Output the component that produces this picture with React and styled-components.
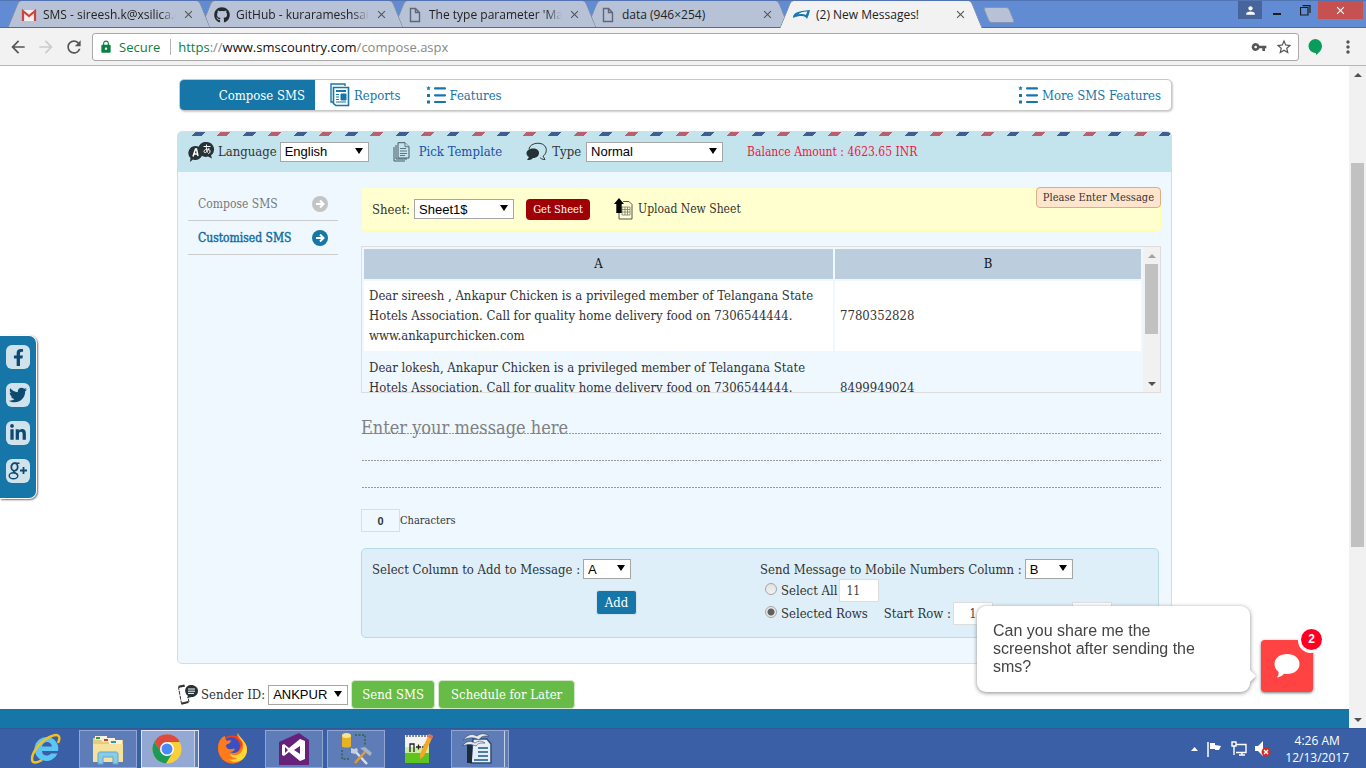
import React from "react";
import styled, { createGlobalStyle, css } from "styled-components";
import {
  MdArrowBack,
  MdArrowForward,
  MdRefresh,
  MdLock,
  MdVpnKey,
  MdStarBorder,
  MdMoreVert,
  MdPerson,
  MdClose,
} from "react-icons/md";
import { FaGithub, FaFacebookF, FaTwitter, FaLinkedinIn } from "react-icons/fa";

const slab = '"DejaVu Serif Condensed", "DejaVu Serif", serif';
const ui = '"Open Sans", "Noto Sans", sans-serif';
const arial = '"Liberation Sans", Arial, sans-serif';
const blue = "#1776a8";

const GlobalStyle = createGlobalStyle`
  * { box-sizing: border-box; }
  body { margin: 0; background: #fff; font-family: ${slab}; font-size: 13px; color: #333; }
  button, input, select, textarea { font: inherit; margin: 0; }
  svg { display: block; flex: none; }
  a { text-decoration: none; color: inherit; }
`;

const Desktop = styled.div`
  display: flex;
  flex-direction: column;
  height: 100vh;
  overflow: hidden;
`;

/* ---------- browser window ---------- */

const TabStrip = styled.header`
  display: flex;
  height: 28px;
  padding-left: 7px;
  background: #618bd2;
  border-bottom: 1px solid #4b6ba6;
  border-top: 1px solid #5274b3;
  font-family: ${ui};
  font-size: 12px;
  color: #222;
`;

const Tab = styled.div`
  position: relative;
  z-index: ${(p) => (p.$active ? 9 : 5 - p.$order)};
  flex: 0 0 204px;
  min-width: 0;
  height: 27px;
  margin-right: -11px;
  padding: 0 16px 0 14px;
  display: flex;
  align-items: center;
  gap: 6px;

  &::before,
  &::after {
    content: "";
    position: absolute;
    z-index: -1;
    top: 0;
    bottom: ${(p) => (p.$active ? 0 : 1)}px;
    width: 52%;
    background: ${(p) => (p.$active ? "#f2f2f2" : "#b8c2d6")};
    border: 0 solid #7c88a0;
  }
  &::before {
    left: 6px;
    transform: skewX(-22deg);
    border-left-width: 1px;
    border-top-left-radius: 3px;
  }
  &::after {
    right: 6px;
    transform: skewX(22deg);
    border-right-width: 1px;
    border-top-right-radius: 3px;
  }
`;

const TabTitle = styled.span`
  flex: 1;
  min-width: 0;
  overflow: hidden;
  white-space: nowrap;
  ${(p) => p.$fade && css`mask-image: linear-gradient(90deg, #000 88%, transparent);`}
`;

const PlainButton = styled.button`
  display: flex;
  align-items: center;
  justify-content: center;
  padding: 0;
  border: 0;
  background: none;
  color: ${(p) => p.$color || "#555"};
`;

const NewTab = styled.button`
  width: 26px;
  height: 16px;
  margin: 6px 0 0 14px;
  padding: 0;
  border: 1px solid #8595b8;
  border-radius: 3px;
  background: #b8c2d6;
  transform: skewX(22deg);
`;

const WindowButtons = styled.div`
  display: flex;
  align-items: flex-start;
  margin-left: auto;
  padding-right: 3px;
`;

const WindowButton = styled.button`
  display: flex;
  align-items: center;
  justify-content: center;
  width: ${(p) => p.$width}px;
  height: 18px;
  padding: 0;
  border: 0;
  color: ${(p) => p.$color || "#1c1c1c"};
  background: ${(p) => p.$bg || "transparent"};
`;

const Toolbar = styled.div`
  display: flex;
  align-items: center;
  height: 38px;
  padding: 0 8px;
  gap: 8px;
  background: #f2f2f2;
  border-bottom: 1px solid #b6b6b6;
`;

const Extensions = styled.div`
  display: flex;
  align-items: center;
  gap: 15px;
`;

const Omnibox = styled.div`
  flex: 1;
  display: flex;
  align-items: center;
  height: 28px;
  padding: 0 5px 0 6px;
  background: #fff;
  border: 1px solid #a9a9a9;
  border-radius: 3px;
  font-family: ${ui};
  font-size: 13px;
  color: #888;
`;

const Secure = styled.span`
  color: #0b8043;
  margin: 0 7px 0 6px;
  padding-right: 10px;
  line-height: 16px;
  border-right: 1px solid #b5b5b5;
`;

const Address = styled.span`
  flex: 1;
  b { font-weight: 400; color: #111; }
  i { font-style: normal; color: #0b8043; }
`;

const OmniActions = styled.div`
  display: flex;
  gap: 8px;
`;

/* ---------- page ---------- */

const Viewport = styled.div`
  position: relative;
  flex: 1;
  min-height: 0;
  display: flex;
`;

const Page = styled.div`
  flex: 1;
  display: flex;
  flex-direction: column;
  overflow: hidden;
`;

const Content = styled.main`
  flex: none;
  width: 100%;
  max-width: 995px;
  margin: 0 auto;
  padding-top: 13px;
`;

const SiteFooter = styled.footer`
  flex: 1;
  min-height: 19px;
  background: ${blue};
`;

const Nav = styled.nav`
  display: flex;
  height: 32px;
  margin: 0 0 20px 2px;
  background: #fff;
  border: 1px solid #c8c8c8;
  border-radius: 5px;
  box-shadow: 1px 1px 2px #ccc;
  overflow: hidden;
  color: ${blue};
`;

const NavLink = styled.a`
  display: flex;
  align-items: center;
  gap: 4px;
  padding: 0 10px;
  ${(p) =>
    p.$active &&
    css`
      width: 135px;
      justify-content: flex-end;
      background: ${blue};
      color: #fff;
    `}
  ${(p) => p.$end && css`margin-left: auto;`}
  ${(p) => p.$spaced && css`padding-left: 15px;`}
`;

const Card = styled.section`
  border: 1px solid #d6dde0;
  border-radius: 5px;
  background: #eff8ff;
  overflow: hidden;
  padding-bottom: 25px;
`;

const AirmailStripes = styled.div`
  height: 4px;
  margin-left: 9px;
  background: repeating-linear-gradient(
    135deg,
    transparent 0 6px,
    #3f5f90 6px 13px,
    transparent 13px 24px,
    #b8606f 24px 31px,
    transparent 31px 36px
  );
`;

const CardHeader = styled.div`
  height: 40px;
  background: #c3e3ed;
`;

const HeaderRow = styled.div`
  display: flex;
  align-items: center;
  height: 31px;
  padding-left: 10px;
`;

const HeaderGroup = styled.div`
  display: flex;
  align-items: center;
  gap: ${(p) => p.$gap || 3}px;
  margin-right: 24px;
  color: ${(p) => p.$color || "#333"};
`;

const Balance = styled.output`
  font-size: 12px;
  color: #ee1742;
`;

const SelectBox = styled.span`
  position: relative;
  display: inline-flex;
  flex: none;
  width: ${(p) => p.$width}px;
  &::after {
    content: "";
    position: absolute;
    right: 6px;
    top: 6px;
    border: 4px solid transparent;
    border-top: 6px solid #000;
    border-bottom: 0;
    pointer-events: none;
  }
`;

const NativeSelect = styled.select`
  appearance: none;
  width: 100%;
  height: 20px;
  padding: 0 4px;
  border: 1px solid #a6a6a6;
  border-radius: 0;
  background: #fff;
  color: #000;
  font-family: ${arial};
  font-size: 13px;
`;

const Columns = styled.div`
  display: flex;
  padding: 15px 10px 0;
`;

const Side = styled.nav`
  flex: 0 0 150px;
  margin-right: 23px;
`;

const SideLink = styled.a`
  display: flex;
  align-items: center;
  justify-content: space-between;
  height: 34px;
  padding: 0 10px;
  border-bottom: 1px solid #ccc;
  font-size: 12px;
  color: ${(p) => (p.$active ? "#0d6d9f" : "#777")};
  -webkit-text-stroke: ${(p) => (p.$active ? "0.4px" : "0")};
`;

const Main = styled.div`
  flex: 1;
  min-width: 0;
`;

const SheetBar = styled.div`
  position: relative;
  display: flex;
  align-items: center;
  height: 44px;
  padding-left: 10px;
  border: 1px solid #ffffa8;
  border-radius: 4px;
  background: #ffffcf;
  gap: 4px;
`;

const Notice = styled.div`
  position: absolute;
  top: -1px;
  right: -1px;
  height: 21px;
  padding: 0 6px;
  border: 1px solid #dcae86;
  border-radius: 4px;
  background: #ffe5cb;
  font-size: 11px;
  line-height: 19px;
`;

const GetSheet = styled.button`
  height: 21px;
  width: 64px;
  margin: 0 20px 0 8px;
  padding: 0;
  border: 0;
  border-radius: 4px;
  background: #a00005;
  color: #fff;
  font-size: 11px;
`;

const UploadLink = styled.a`
  display: flex;
  align-items: center;
  gap: 4px;
  font-size: 12px;
`;

const Grid = styled.div`
  display: flex;
  height: 147px;
  margin-top: 15px;
  border: 1px solid #ddd;
  overflow: hidden;
`;

const GridBody = styled.div`
  flex: 1;
  overflow: hidden;
`;

const Table = styled.table`
  width: 100%;
  border-spacing: 2px;
  table-layout: fixed;
  line-height: 20px;
  th { padding: 5px; background: #bccdde; font-weight: 400; color: #111; }
  th:first-child { width: 469px; }
  td { padding: 5px; }
  tbody tr:nth-child(odd) td { background: #fff; }
`;

const Track = styled.div`
  flex: 0 0 17px;
  display: flex;
  flex-direction: column;
  align-items: center;
  background: #f1f1f1;
`;

const Arrow = styled.span`
  height: 17px;
  display: flex;
  align-items: center;
  &::before {
    content: "";
    border: 4px solid transparent;
    ${(p) =>
      p.$up
        ? css`border-bottom-color: ${p.$faint ? "#a3a3a3" : "#505050"}; border-top: 0;`
        : css`border-top-color: #505050; border-bottom: 0;`}
  }
`;

const Thumb = styled.span`
  width: 13px;
  height: ${(p) => p.$size};
  margin-top: ${(p) => p.$start};
  margin-bottom: auto;
  background: #c1c1c1;
`;

const Message = styled.textarea`
  display: block;
  width: 100%;
  height: 81px;
  margin-top: 14px;
  padding: 7px 0 0;
  border: 0;
  resize: none;
  overflow: hidden;
  line-height: 27px;
  font-size: 18px;
  background:
    linear-gradient(90deg, #eff8ff 1px, transparent 1px) 0 0 / 3px 100%,
    linear-gradient(transparent 26px, #999 26px) 0 0 / 100% 27px;
  &::placeholder { color: #808080; opacity: 1; }
`;

const Counter = styled.label`
  display: flex;
  align-items: center;
  margin: 21px 0 16px;
  font-size: 11px;
`;

const CountInput = styled.input`
  width: 39px;
  height: 23px;
  padding: 0;
  border: 1px solid #ddd;
  background: transparent;
  text-align: center;
  font-family: ${arial};
  font-weight: 700;
  font-size: 11px;
  color: #333;
`;

const Options = styled.div`
  display: flex;
  height: 90px;
  margin-right: 2px;
  padding: 10px;
  border: 1px solid #b7dbe9;
  border-radius: 5px;
  background: #deeffa;
`;

const OptionColumn = styled.div`
  flex: 0 0 ${(p) => p.$basis};
  white-space: nowrap;
`;

const Field = styled.div`
  display: flex;
  align-items: center;
  gap: 3px;
  height: 20px;
`;

const RadioRow = styled.div`
  display: flex;
  align-items: center;
  gap: 2px;
  height: 23px;
  padding-left: 5px;
`;

const Radio = styled.input`
  appearance: none;
  width: 12px;
  height: 12px;
  margin: 0 2px 4px 0;
  border: 1px solid #a5a5a5;
  border-radius: 50%;
  background: linear-gradient(#e2e2e2, #f2f2f2);
  &:checked { background: radial-gradient(circle, #606060 3px, #eaeaea 4px); }
`;

const RowInput = styled.input`
  width: 40px;
  height: 23px;
  padding: 0 6px;
  border: 1px solid #ddd;
  background: #fff;
  color: #444;
  font-size: 12px;
  text-align: ${(p) => p.$align || "left"};
`;

const RowLabel = styled.label`
  margin-left: ${(p) => p.$left || 0}px;
`;

const AddButton = styled.button`
  display: block;
  width: 41px;
  height: 25px;
  margin: 11px 0 0 224px;
  padding: 0;
  border: 1px solid #d2e4ee;
  border-radius: 3px;
  background: ${blue};
  color: #fff;
`;

const SendRow = styled.div`
  display: flex;
  align-items: center;
  gap: 3px;
  margin-top: 16px;
  height: 29px;
`;

const GreenButton = styled.button`
  height: 29px;
  padding: 0;
  width: ${(p) => p.$width}px;
  border: 1px solid #d2e6ca;
  border-radius: 4px;
  background: #66bc46;
  color: #fff;
`;

const Social = styled.aside`
  position: absolute;
  left: 0;
  top: 269px;
  display: flex;
  flex-direction: column;
  gap: 14px;
  padding: 9px 6px 15px;
  background: ${blue};
  border: 1px solid #fff;
  border-left: 0;
  border-radius: 0 8px 8px 0;
  box-shadow: 1px 1px 2px #777;
`;

const SocialLink = styled.a`
  display: flex;
  align-items: center;
  justify-content: center;
  width: 24px;
  height: 24px;
  border-radius: 6px;
  background: #d0e3ec;
  color: #0d4a72;
`;

const Chat = styled.div`
  position: absolute;
  right: 53px;
  bottom: 36px;
  display: flex;
  align-items: flex-end;
  gap: 11px;
`;

const Bubble = styled.div`
  position: relative;
  width: 273px;
  padding: 16px 40px 16px 16px;
  border-radius: 9px;
  background: #fff;
  filter: drop-shadow(0 1px 2px #888);
  font-family: ${arial};
  font-size: 16px;
  line-height: 18px;
  color: #444;
  &::after {
    content: "";
    position: absolute;
    right: -6px;
    bottom: 9px;
    border: 7px solid transparent;
    border-left-color: #fff;
    border-right: 0;
  }
`;

const ChatButton = styled.button`
  position: relative;
  display: flex;
  align-items: center;
  justify-content: center;
  width: 52px;
  height: 52px;
  padding: 0;
  border: 0;
  border-radius: 4px;
  background: #ff4242;
  box-shadow: 0 1px 3px #777;
`;

const Badge = styled.span`
  position: absolute;
  top: -11px;
  right: -9px;
  width: 21px;
  height: 21px;
  border-radius: 50%;
  background: #ff0022;
  box-shadow: -1px 1px 0 2px #fff;
  color: #fff;
  font: 700 12px/21px ${arial};
`;

/* ---------- taskbar ---------- */

const Taskbar = styled.footer`
  display: flex;
  align-items: center;
  height: 40px;
  padding: 0 17px;
  gap: 4px;
  background: #3a5fa6;
  border-top: 1px solid #345798;
`;

const Task = styled.button`
  display: flex;
  align-items: center;
  justify-content: center;
  width: 58px;
  height: 38px;
  padding: 0 ${(p) => (p.$stacked ? 6 : 0)}px 0 0;
  border: 1px solid ${(p) => (p.$active ? "#dfe6f2" : p.$open ? "#90a5cf" : "transparent")};
  background: ${(p) => (p.$active ? "#93a8d2" : p.$open ? "#5e7cb8" : "transparent")};
  ${(p) => p.$stacked && css`box-shadow: inset -3px 0 0 #5e7cb8, inset -4px 0 0 #c5d0e6;`}
`;

const Tray = styled.div`
  display: flex;
  align-items: center;
  gap: 8px;
  margin-left: auto;
`;

const Clock = styled.time`
  margin-left: 6px;
  text-align: center;
  font-family: ${ui};
  font-size: 12px;
  line-height: 17px;
  color: #fff;
`;

/* ---------- drawings ---------- */

const GmailIcon = () => (
  <svg width="16" height="14" viewBox="0 0 16 14">
    <path d="M1 2h14v11H1z" fill="#f3f1f1" />
    <path d="M2 13V3l6 5 6-5v10" fill="none" stroke="#d0443c" strokeWidth="2.2" />
  </svg>
);

const PageIcon = () => (
  <svg width="16" height="16" viewBox="0 0 16 16" fill="none" stroke="#5f6675" strokeWidth="1.4">
    <path d="M3.5 1.5h5l4 4v9h-9zM8.5 1.5v4h4" />
  </svg>
);

const SiteIcon = () => (
  <svg width="17" height="12" viewBox="0 0 17 12">
    <path d="M0 9C0 4 4 2 17 1c-.5 3-1.500 6-3 9-1-2-3-3-5-3-3 0-6 .5-9 2zm5-3.500c3-.8 6-.5 7.500.5.800-1 1.500-2 1.700-3.500C10 2.800 7 3.500 5 5.500z" fill="#167ab0" fillRule="evenodd" />
  </svg>
);

const RestoreIcon = () => (
  <svg width="11" height="11" viewBox="0 0 11 11" fill="none" stroke="#1c1c1c">
    <path d="M.5 2.500h7.500v7.500H.5zM2.500.6H10v7.500" strokeWidth="1.2" />
  </svg>
);

const GreenDrop = () => (
  <svg width="16" height="18" viewBox="0 0 16 18">
    <path d="M8 1a7 7 0 0 1 7 7c0 4-3 7-6 9v-2A7 7 0 1 1 8 1z" fill="#0a9c5a" />
  </svg>
);

const ReportsIcon = () => (
  <svg width="20" height="24" viewBox="0 0 20 24" fill="none" stroke={blue}>
    <path d="M3 19H1V1h14v2" strokeWidth="1.4" />
    <path d="M3.500 4.500h15v18H6l-2.500-2z" strokeWidth="1.6" fill="#fff" />
    <path d="M6 8h10" strokeWidth="2" />
    <path d="M6 11.500h3M6 14h3M6 16.500h3M6 19h10" strokeWidth="1.1" />
    <path d="M11 11h5v6h-5z" fill={blue} />
  </svg>
);

const ListIcon = () => (
  <svg width="20" height="18" viewBox="0 0 20 18" fill={blue}>
    <path d="M2.500 0l.7 1.300 1.500.2-1.200 1.100.4 1.700-1.400-.8-1.400.8.4-1.700L.3 1.500l1.500-.2z" />
    <path d="M1 8h3v3H1zM1 14.500h3v3H1z" />
    <path d="M9 2.300h10M9 9.300h10M9 16h10" stroke={blue} strokeWidth="2.200" strokeLinecap="round" />
  </svg>
);

const LanguageIcon = () => (
  <svg width="27" height="20" viewBox="0 0 27 20">
    <path d="M7 4a7 7 0 1 1-2 13.500L2 20l.5-4A7 7 0 0 1 7 4z" fill="#263238" />
    <path d="M19 0a7.500 7.500 0 0 1 4 13.500l1 3-4-2A7.500 7.500 0 1 1 19 0z" fill="#263238" />
    <path d="M5 14.500 7.500 7h1L10 14M5.500 12h4.500" stroke="#fff" strokeWidth="1.500" fill="none" />
    <path d="M15.500 4.500h7M18.500 2.500c-.3 4 0 6 1 8M21 6c-1 4-5 6-5 3.500S22 6 22 9s-2 2.500-2 2.500" stroke="#fff" fill="none" />
  </svg>
);

const TemplateIcon = () => (
  <svg width="18" height="20" viewBox="0 0 18 20" fill="#c3e3ed" stroke="#475960">
    <path d="M1 5v14h11M3 3v14h11" />
    <path d="M5 .7h7l4 4V16H5z" />
    <path d="M12 .7v4h4M7 6.500h6M7 9h7M7 11.500h7M7 13.500h5" strokeWidth=".8" />
  </svg>
);

const TypeIcon = () => (
  <svg width="21" height="19" viewBox="0 0 21 19">
    <path d="M3 7C4 0 18-1 20 6c1 4-1 7-3 8l2 3.500c-3 0-4-1-5-2" fill="none" stroke="#333c40" />
    <path d="M7 6.500c4 0 6 2 6 4.500s-2 5-6 5c-2 2-3 2-6 2l2-3C-2 12 1 6.500 7 6.500z" fill="#263238" />
  </svg>
);

const CircleArrow = ({ color }) => (
  <svg width="16" height="16" viewBox="0 0 16 16">
    <circle cx="8" cy="8" r="8" fill={color} />
    <path d="M4 8h7M8 4.500 11.500 8 8 11.500" stroke="#fff" strokeWidth="2" fill="none" />
  </svg>
);

const UploadIcon = () => (
  <svg width="20" height="22" viewBox="0 0 20 22">
    <path d="M9 3.500h6l3 3V21H5v-6" fill="#ffffcf" stroke="#555" />
    <path d="M8 9h8v8H8zM8 11.500h8M8 14h8M11 9v8M13.500 9v8" fill="none" stroke="#777" strokeWidth=".8" />
    <path d="M5 0 0 6h2.300v9h5.400V6H10z" fill="#000" />
  </svg>
);

const SenderIcon = () => (
  <svg width="21" height="21" viewBox="0 0 21 21">
    <path d="M8 2 1.500 3.500l3 16L12 18l-1-5" fill="none" stroke="#333" strokeDasharray="4 1" />
    <path d="m1.500 2.800 6-1.300M4.300 19.700l7-1.700" stroke="#333" strokeWidth="2" />
    <path d="M14 1c4 0 7 2.500 7 6s-3 6-6 6c-2 0-3 1-5 1l1-2C6 8 8 1 14 1z" fill="#263238" />
    <path d="M11 5h7M11 7.200h7M11 9.400h6" stroke="#fff" />
  </svg>
);

const ChatIcon = () => (
  <svg width="26" height="24" viewBox="0 0 26 24">
    <path d="M13 0c7 0 12.500 4 12.500 10S20 20 13 20c-1 0-2 0-3-.3C8 22 6 23 3 23.500c1-1.500 2-3 1.500-5.500C2 16 .5 13 .5 10 .5 4 6 0 13 0z" fill="#fff" />
  </svg>
);

const IeIcon = () => (
  <svg width="32" height="32" viewBox="0 0 32 32">
    <path d="M17 4a11.500 11.500 0 0 1 11 14H12c0 5 6 6 9 2.500h6.500A12 12 0 1 1 17 4zm-5 9.500h10c-1-6-9-6-10 0z" fill="#5cc6f5" fillRule="evenodd" />
    <path d="M28 10c3-6 1-10-6-7C13 6 2 18 2 26c0 5 5 4 10 1" fill="none" stroke="#f5c21b" strokeWidth="2.400" />
  </svg>
);

const FolderIcon = () => (
  <svg width="34" height="32" viewBox="0 0 34 32">
    <path d="M2 5h9l1 2h20v22H2z" fill="#e6cd7c" />
    <path d="M4 3h12v4H4zM11 5h13v4H11zM18 7h13v4H18z" fill="#f7f3da" />
    <path d="M5 4h4v2H5z" fill="#2f9e44" />
    <path d="M13 6h4v2h-4z" fill="#d03c2f" />
    <path d="M20 8h5v2h-5z" fill="#2f8fd0" />
    <path d="M2 11h30v18H2z" fill="#f5e39d" />
    <path d="M7 31V21c0-1 1-2 2-2h16c1 0 2 1 2 2v10h-5v-7H12v7z" fill="#8ccbe8" stroke="#5aa7cf" />
  </svg>
);

const ChromeIcon = () => (
  <svg width="30" height="30" viewBox="0 0 30 30">
    <circle cx="15" cy="15" r="14.500" fill="#f9cf3b" />
    <path d="M2.500 7.500A14.500 14.500 0 0 0 14 29.500L21 18l-6 3-6-3z" fill="#1d9a58" />
    <path d="M15 8h12.800A14.500 14.500 0 0 0 2.500 7.500L9 18.500z" fill="#dd4b3e" />
    <circle cx="15" cy="15" r="7" fill="#fff" />
    <circle cx="15" cy="15" r="5.500" fill="#4a8af4" />
  </svg>
);

const FirefoxIcon = () => (
  <svg width="31" height="31" viewBox="0 0 31 31">
    <circle cx="15.500" cy="16.500" r="14" fill="#f2401f" />
    <circle cx="14" cy="13" r="9" fill="#3b4fc4" />
    <path d="M20 0c-1 4 3 6 5 9 1 2 0 4-1 6-2 5-8 6-11 4 3 0 4-1 5-3-2-1-4 1-6 0-2 0-3-2-3-4 1-1 3-1 4-2 0-1 1-2 2-2-2-1-4-1-5 0C8 6 8 5 8 3 4 4 1 9 1 15c0 9 7 15.500 14.500 15.500S30 24 30 17c0-9-6-10-10-17z" fill="#ff7a1a" />
    <path d="M21 0c0 5 6 7 5 15-1 6-7 9-13 6 1 3 4 4 7 4-3 2-7 2-9 1 9 7 19 0 19-9 0-8-6-10-9-17z" fill="#ffd738" />
  </svg>
);

const VsIcon = () => (
  <svg width="30" height="32" viewBox="0 0 30 32">
    <path d="M0 9 20 0l10 7v25H0z" fill="#68217a" />
    <path d="m21 6 5 2v18l-5 2L10 19l-5 4-2-1V12l2-1 5 4zm0 7-6 4 6 4zM6 14v6l3-3z" fill="#fff" fillRule="evenodd" />
  </svg>
);

const ToolsIcon = () => (
  <svg width="32" height="34" viewBox="0 0 32 34">
    <path d="M2 4v10c0 2 9 2 9 0V4z" fill="#e6b422" />
    <ellipse cx="6.500" cy="3.500" rx="4.500" ry="2.500" fill="#fbe38e" />
    <path d="M15 3h10v10M2 18v9h8" fill="none" stroke="#2b6a3b" strokeWidth="1.500" strokeDasharray="2 1.500" />
    <path d="m14 18 13 14" stroke="#d9dee5" strokeWidth="2.500" />
    <path d="M25 20 15 31" stroke="#e39b2d" strokeWidth="2.500" />
    <path d="m20 16 5-1 7 6-2 3-5-4z" fill="#a9b3bf" />
    <path d="M11 16l3 1 3-1 1 3-3 3-4-1z" fill="#c7ced8" />
  </svg>
);

const NppIcon = () => (
  <svg width="32" height="34" viewBox="0 0 32 34">
    <path d="M3 3h24v28H3z" fill="#f2f4f0" />
    <path d="M3 20h24v11H3z" fill="#5fc41f" />
    <path d="M3 15h24v6H3z" fill="#c9ef9e" />
    <path d="M4 4h22" stroke="#888" strokeWidth="2" strokeDasharray="2 1" />
    <path d="M8 20v-8h4v8M14 15h5m-2.500-2.500v5M20 15h5m-2.500-2.500v5" fill="none" stroke="#222" strokeWidth="1.300" />
    <path d="m27 2 4 2-9 20-4 3v-5z" fill="#f3a82a" />
    <path d="m27 2 4 2-1 3-4-2z" fill="#e06a6a" />
  </svg>
);

const WriterIcon = () => (
  <svg width="32" height="34" viewBox="0 0 32 34">
    <path d="M12 7h14l4 5v19H10z" fill="#e8eef5" stroke="#2b4f75" strokeWidth="1.500" />
    <path d="M17 16h10M17 20h10M17 24h10M13 28h14" stroke="#4a7cae" strokeWidth="1.800" />
    <path d="M6 12h5v19H6z" fill="#1d2c3d" />
    <path d="M2 8c6-7 10-6 14-4 4-3 8-3 12 0-5 0-8 0-10 4-5-3-9-3-16 0zM1 14c5-6 9-5 13-3 4-3 7-2 10 0-5 0-7 0-9 3-5-2-8-2-14 0z" fill="#e5ebf2" stroke="#32465c" strokeWidth=".6" />
  </svg>
);

const FlagIcon = () => (
  <svg width="17" height="16" viewBox="0 0 17 16">
    <path d="M2 1v15" stroke="#fff" strokeWidth="1.500" />
    <path d="M4 2h5v2l6 1-2 4H9V8H4z" fill="#fff" />
  </svg>
);

const NetworkIcon = () => (
  <svg width="16" height="16" viewBox="0 0 16 16" fill="none" stroke="#fff" strokeWidth="1.400">
    <path d="M5 3.500h10v8H5M8 14h6M11 11v3" />
    <path d="M1 1h4v4H1zM3 5v9" />
  </svg>
);

const SpeakerIcon = () => (
  <svg width="16" height="16" viewBox="0 0 16 16">
    <path d="M0 5h3l5-5v15l-5-5H0z" fill="#fff" />
    <circle cx="11" cy="11" r="4.500" fill="#d8281e" />
    <path d="m9 9 4 4m0-4-4 4" stroke="#fff" strokeWidth="1.400" />
  </svg>
);

/* ---------- composed parts ---------- */

function Select({ id, width, value, options = [] }) {
  return (
    <SelectBox $width={width}>
      <NativeSelect id={id} defaultValue={value}>
        <option>{value}</option>
        {options.map((o) => (
          <option key={o}>{o}</option>
        ))}
      </NativeSelect>
    </SelectBox>
  );
}

const tabs = [
  { title: "SMS - sireesh.k@xsilica.c", icon: <GmailIcon />, fade: true },
  { title: "GitHub - kurarameshsai/A", icon: <FaGithub size={16} color="#24292e" />, fade: true },
  { title: "The type parameter 'Maa", icon: <PageIcon />, fade: true },
  { title: "data (946×254)", icon: <PageIcon /> },
  { title: "(2) New Messages!", icon: <SiteIcon />, active: true },
];

function BrowserBar() {
  return (
    <>
      <TabStrip>
        {tabs.map((t, i) => (
          <Tab key={t.title} $order={i} $active={t.active}>
            {t.icon}
            <TabTitle $fade={t.fade}>{t.title}</TabTitle>
            <PlainButton aria-label="Close tab">
              <MdClose size={13} />
            </PlainButton>
          </Tab>
        ))}
        <NewTab aria-label="New tab" />
        <WindowButtons>
          <WindowButton aria-label="Profile" $width={24} $bg="#48659b" $color="#fff">
            <MdPerson size={13} />
          </WindowButton>
          <WindowButton aria-label="Minimize" $width={30}>
            <svg width="8" height="12"><path d="M0 9h8v2H0z" fill="#1c1c1c" /></svg>
          </WindowButton>
          <WindowButton aria-label="Restore" $width={26}>
            <RestoreIcon />
          </WindowButton>
          <WindowButton aria-label="Close" $width={45} $bg="#c75050" $color="#fff">
            <MdClose size={13} />
          </WindowButton>
        </WindowButtons>
      </TabStrip>
      <Toolbar>
        <PlainButton aria-label="Back"><MdArrowBack size={20} /></PlainButton>
        <PlainButton aria-label="Forward" $color="#ccc"><MdArrowForward size={20} /></PlainButton>
        <PlainButton aria-label="Reload"><MdRefresh size={20} /></PlainButton>
        <Omnibox>
          <MdLock size={14} color="#0b8043" />
          <Secure>Secure</Secure>
          <Address><i>https</i>://<b>www.smscountry.com</b>/compose.aspx</Address>
          <OmniActions>
            <PlainButton aria-label="Passwords"><MdVpnKey size={16} /></PlainButton>
            <PlainButton aria-label="Bookmark"><MdStarBorder size={18} /></PlainButton>
          </OmniActions>
        </Omnibox>
        <Extensions>
          <PlainButton aria-label="Extension"><GreenDrop /></PlainButton>
          <PlainButton aria-label="Menu"><MdMoreVert size={20} /></PlainButton>
        </Extensions>
      </Toolbar>
    </>
  );
}

function ComposeCard() {
  return (
    <Card>
      <CardHeader>
        <AirmailStripes />
        <HeaderRow>
          <HeaderGroup>
            <LanguageIcon />
            <label htmlFor="language">Language</label>
            <Select id="language" width={89} value="English" />
          </HeaderGroup>
          <HeaderGroup as="a" href="#template" $gap={8} $color="#1a50a5">
            <TemplateIcon />
            Pick Template
          </HeaderGroup>
          <HeaderGroup $gap={5}>
            <TypeIcon />
            <label htmlFor="type">Type</label>
            <Select id="type" width={137} value="Normal" />
          </HeaderGroup>
          <Balance>Balance Amount : 4623.65 INR</Balance>
        </HeaderRow>
      </CardHeader>
      <Columns>
        <Side>
          <SideLink href="#compose">Compose SMS <CircleArrow color="#c4c4c4" /></SideLink>
          <SideLink href="#custom" $active>Customised SMS <CircleArrow color={blue} /></SideLink>
        </Side>
        <Main>
          <SheetBar>
            <label htmlFor="sheet">Sheet:</label>
            <Select id="sheet" width={100} value="Sheet1$" />
            <GetSheet>Get Sheet</GetSheet>
            <UploadLink href="#upload"><UploadIcon /> Upload New Sheet</UploadLink>
            <Notice>Please Enter Message</Notice>
          </SheetBar>
          <Grid>
            <GridBody>
              <Table>
                <thead>
                  <tr><th>A</th><th>B</th></tr>
                </thead>
                <tbody>
                  <tr>
                    <td>Dear sireesh , Ankapur Chicken is a privileged member of Telangana State Hotels Association. Call for quality home delivery food on 7306544444. www.ankapurchicken.com</td>
                    <td>7780352828</td>
                  </tr>
                  <tr>
                    <td>Dear lokesh, Ankapur Chicken is a privileged member of Telangana State Hotels Association. Call for quality home delivery food on 7306544444. www.ankapurchicken.com</td>
                    <td>8499949024</td>
                  </tr>
                </tbody>
              </Table>
            </GridBody>
            <Track>
              <Arrow $up $faint />
              <Thumb $size="70px" $start="0" />
              <Arrow />
            </Track>
          </Grid>
          <Message aria-label="Message" placeholder="Enter your message here" />
          <Counter>
            <CountInput readOnly value="0" />
            Characters
          </Counter>
          <Options>
            <OptionColumn $basis="388px">
              <Field>
                <label htmlFor="col">Select Column to Add to Message :</label>
                <Select id="col" width={48} value="A" options={["B"]} />
              </Field>
              <AddButton>Add</AddButton>
            </OptionColumn>
            <OptionColumn $basis="auto">
              <Field>
                <label htmlFor="mob">Send Message to Mobile Numbers Column :</label>
                <Select id="mob" width={48} value="B" options={["A"]} />
              </Field>
              <RadioRow>
                <Radio type="radio" name="rows" id="all" />
                <label htmlFor="all">Select All</label>
                <RowInput aria-label="Row count" defaultValue="11" />
              </RadioRow>
              <RadioRow>
                <Radio type="radio" name="rows" id="some" defaultChecked />
                <label htmlFor="some">Selected Rows</label>
                <RowLabel $left={14} htmlFor="start">Start Row :</RowLabel>
                <RowInput id="start" defaultValue="1" $align="center" />
                <RowLabel $left={14} htmlFor="end">End Row :</RowLabel>
                <RowInput id="end" />
              </RadioRow>
            </OptionColumn>
          </Options>
        </Main>
      </Columns>
    </Card>
  );
}

export default function App() {
  return (
    <Desktop>
      <GlobalStyle />
      <BrowserBar />
      <Viewport>
        <Page>
          <Content>
            <Nav>
              <NavLink href="#sms" $active>Compose SMS</NavLink>
              <NavLink href="#reports" $spaced><ReportsIcon /> Reports</NavLink>
              <NavLink href="#features" $spaced><ListIcon /> Features</NavLink>
              <NavLink href="#more" $end><ListIcon /> More SMS Features</NavLink>
            </Nav>
            <ComposeCard />
            <SendRow>
              <SenderIcon />
              <label htmlFor="sender">Sender ID:</label>
              <Select id="sender" width={80} value="ANKPUR" />
              <GreenButton $width={84}>Send SMS</GreenButton>
              <GreenButton $width={137}>Schedule for Later</GreenButton>
            </SendRow>
          </Content>
          <SiteFooter />
        </Page>
        <Track>
          <Arrow $up />
          <Thumb $size="58%" $start="80px" />
          <Arrow />
        </Track>
        <Social>
          <SocialLink href="#fb" aria-label="Facebook"><FaFacebookF size={17} /></SocialLink>
          <SocialLink href="#tw" aria-label="Twitter"><FaTwitter size={18} /></SocialLink>
          <SocialLink href="#in" aria-label="LinkedIn"><FaLinkedinIn size={18} /></SocialLink>
          <SocialLink href="#gp" aria-label="Google Plus">
            <svg width="20" height="18" viewBox="0 0 20 18" fill="none" stroke="#0d4a72">
              <ellipse cx="6.500" cy="5" rx="3.200" ry="3.800" strokeWidth="1.800" />
              <ellipse cx="5.500" cy="13.800" rx="4.300" ry="3" strokeWidth="1.400" />
              <path d="M6 1.200h5.500M6 9c-2 2 3 2 3.500 4" strokeWidth="1.500" />
              <path d="M12 8.500h7M15.500 5v7" strokeWidth="1.800" />
            </svg>
          </SocialLink>
        </Social>
        <Chat>
          <Bubble>Can you share me the screenshot after sending the sms?</Bubble>
          <ChatButton aria-label="Open chat">
            <ChatIcon />
            <Badge>2</Badge>
          </ChatButton>
        </Chat>
      </Viewport>
      <Taskbar>
        <Task aria-label="Internet Explorer"><IeIcon /></Task>
        <Task aria-label="File Explorer" $open><FolderIcon /></Task>
        <Task aria-label="Chrome" $open $active $stacked><ChromeIcon /></Task>
        <Task aria-label="Firefox"><FirefoxIcon /></Task>
        <Task aria-label="Visual Studio" $open><VsIcon /></Task>
        <Task aria-label="SQL tools" $open><ToolsIcon /></Task>
        <Task aria-label="Notepad++"><NppIcon /></Task>
        <Task aria-label="Writer" $open $stacked><WriterIcon /></Task>
        <Tray>
          <svg width="7" height="4" viewBox="0 0 7 4"><path d="M3.500 0 7 4H0z" fill="#fff" /></svg>
          <FlagIcon />
          <NetworkIcon />
          <SpeakerIcon />
          <Clock>4:26 AM<br />12/13/2017</Clock>
        </Tray>
      </Taskbar>
    </Desktop>
  );
}
